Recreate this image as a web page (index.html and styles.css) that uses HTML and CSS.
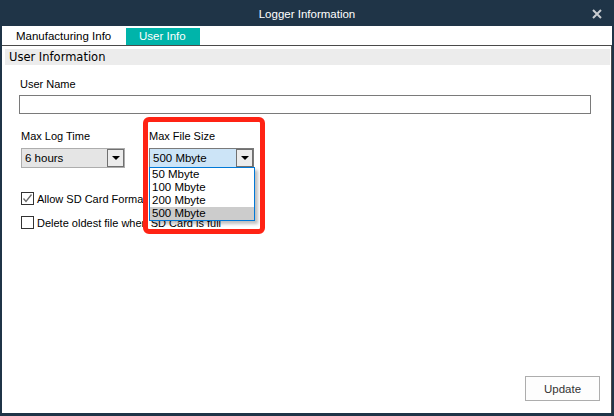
FILE: index.html
```html
<!DOCTYPE html>
<html>
<head>
<meta charset="utf-8">
<link rel="stylesheet" href="styles.css">
</head>
<body>
<div class="window">
  <div class="titlebar">
    <span class="title">Logger Information</span>
    <svg class="close" width="10" height="10" viewBox="0 0 10 10"><path d="M1 1 L9 9 M9 1 L1 9" stroke="#c9ccd0" stroke-width="2"/></svg>
  </div>
  <div class="client">
    <div class="tabs">
      <div class="tab">Manufacturing Info</div>
      <div class="tab active">User Info</div>
    </div>
    <div class="panel">
      <div class="group-header">User Information</div>
      <div class="form">
        <label class="lbl lbl-user">User Name</label>
        <div class="textbox"></div>
        <div class="row">
          <div class="field field-time">
            <label class="lbl">Max Log Time</label>
            <div class="combo">
              <span class="combo-text">6 hours</span>
              <span class="combo-btn"><i class="arrow"></i></span>
            </div>
          </div>
          <div class="field field-size">
            <label class="lbl">Max File Size</label>
            <div class="combo focused">
              <span class="combo-text">500 Mbyte</span>
              <span class="combo-btn"><i class="arrow"></i></span>
              <ul class="dropdown">
                <li>50 Mbyte</li>
                <li>100 Mbyte</li>
                <li>200 Mbyte</li>
                <li class="sel">500 Mbyte</li>
              </ul>
            </div>
          </div>
        </div>
        <div class="check check-first">
          <span class="box"><svg width="11" height="11" viewBox="0 0 11 11"><path d="M1.5 5.5 L4 8.5 L9.5 1.5" fill="none" stroke="#6a6a6a" stroke-width="1.3"/></svg></span>
          <span class="check-text">Allow SD Card Format</span>
        </div>
        <div class="check">
          <span class="box"></span>
          <span class="check-text">Delete oldest file when SD Card is full</span>
        </div>
      </div>
      <div class="footer">
        <button class="btn">Update</button>
      </div>
    </div>
  </div>
  <div class="highlight"></div>
</div>
</body>
</html>
```
FILE: styles.css
```css
* { box-sizing: border-box; }
html, body { margin: 0; padding: 0; }
body {
  width: 614px;
  height: 416px;
  background: #1f3447;
  font-family: "Liberation Sans", Arial, sans-serif;
  overflow: hidden;
}
.window {
  position: relative;
  width: 614px;
  height: 416px;
  display: flex;
  flex-direction: column;
}
.titlebar {
  height: 26px;
  display: flex;
  align-items: center;
  justify-content: center;
  position: relative;
  color: #ffffff;
  font-size: 11.5px;
}
.title { padding-left: 0; padding-top: 1px; }
.close {
  position: absolute;
  right: 12px;
  top: 9px;
}
.client {
  flex: 1;
  margin: 0 2px 3px 2px;
  background: #ffffff;
  display: flex;
  flex-direction: column;
}
.tabs {
  height: 20px;
  display: flex;
  align-items: flex-end;
  border-bottom: 1px solid #4a4a4a;
  font-size: 11.5px;
  white-space: nowrap;
}
.tab {
  height: 17px;
  line-height: 16px;
  padding: 0 0 0 14px;
  color: #000;
  width: 124px;
}
.tab.active {
  width: 74px;
  background: #00b4aa;
  color: #ffffff;
  padding: 0 0 0 13px;
}
.panel {
  flex: 1;
  display: flex;
  flex-direction: column;
  border-right: 1px solid #4a4a4a;
  padding: 3px 1px 0 3px;
}
.group-header {
  height: 16px;
  background: #ececec;
  font-family: "DejaVu Sans", Verdana, sans-serif;
  font-size: 11.5px;
  line-height: 16px;
  padding-left: 4px;
  color: #000;
  white-space: nowrap;
}
.form {
  display: flex;
  flex-direction: column;
  align-items: flex-start;
  padding-left: 14px;
  font-size: 11px;
  color: #000;
}
.lbl { display: block; line-height: 13px; white-space: nowrap; }
.lbl-user { margin-top: 13px; margin-left: 1px; }
.textbox {
  margin-top: 4px;
  width: 572px;
  height: 19px;
  border: 1px solid #7a7a7a;
  background: #fff;
}
.row {
  display: flex;
  margin-top: 16px;
  margin-left: 2px;
}
.field { display: flex; flex-direction: column; }
.field-time { width: 128px; }
.field .lbl { margin-bottom: 5px; }
.combo {
  position: relative;
  width: 104px;
  height: 20px;
  border: 1px solid #adadad;
  background: #e5e5e5;
  display: flex;
  align-items: center;
  padding-left: 3px;
}
.combo.focused {
  width: 105px;
  border-color: #7a7a7a;
  background: #cce4f7;
}
.combo-text { flex: 1; font-size: 11.5px; line-height: 14px; white-space: nowrap; padding-bottom: 1px; }
.combo-btn {
  width: 17px;
  height: 18px;
  border: 1px solid #707070;
  background: #ececec;
  display: flex;
  align-items: center;
  justify-content: center;
}
.arrow {
  width: 0;
  height: 0;
  border-left: 4px solid transparent;
  border-right: 4px solid transparent;
  border-top: 4px solid #000;
}
.dropdown {
  position: absolute;
  left: -1px;
  top: 18px;
  width: 106px;
  margin: 0;
  padding: 0;
  list-style: none;
  background: #fff;
  border: 1px solid #0078d7;
  box-shadow: 3px 3px 3px rgba(0,0,0,0.25);
}
.dropdown li {
  height: 13px;
  line-height: 12px;
  font-size: 11.5px;
  padding-left: 2px;
  white-space: nowrap;
}
.dropdown li.sel { background: #cccccc; }
.check {
  display: flex;
  align-items: center;
  margin-left: 2px;
  margin-top: 11px;
  height: 13px;
}
.check-first { margin-top: 24px; }
.box {
  width: 13px;
  height: 13px;
  border: 1px solid #333;
  background: #fff;
  display: flex;
  align-items: center;
  justify-content: center;
}
.check-text { margin-left: 3px; font-size: 11px; white-space: nowrap; }
.footer {
  margin-top: auto;
  display: flex;
  justify-content: flex-end;
  padding: 0 10px 12px 0;
}
.btn {
  width: 75px;
  height: 25px;
  border: 1px solid #adadad;
  background: #fdfdfd;
  font-family: "Liberation Sans", Arial, sans-serif;
  font-size: 11.5px;
  color: #333;
  padding: 0;
}
.highlight {
  position: absolute;
  left: 143px;
  top: 117px;
  width: 122px;
  height: 117px;
  border: 5px solid #ff2314;
  border-radius: 6px;
}
```
